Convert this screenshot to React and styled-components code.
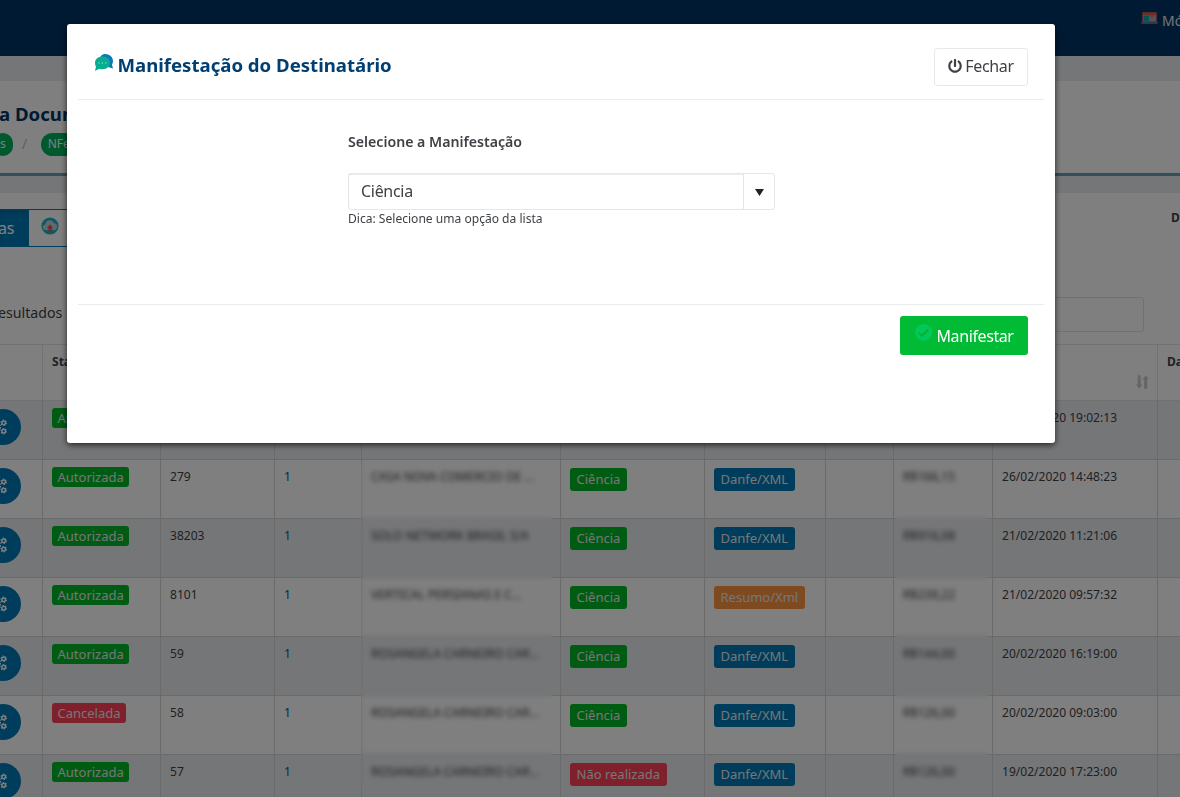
import React from "react";
import styled, { createGlobalStyle, css } from "styled-components";
import { FaPowerOff } from "react-icons/fa";

const Global = createGlobalStyle`
  *, *::before, *::after { box-sizing: border-box; }
  body { margin: 0; overflow: hidden; background: #ebedf1; color: #3e4246; font: 16px/1.5 "Noto Sans", "Open Sans", sans-serif; }
`;

const Page = styled.div`
  position: relative;
  width: 1180px;
  height: 797px;
  overflow: hidden;
  display: flex;
  flex-direction: column;
  background: #ebedf1;
`;
const TopBar = styled.header`
  height: 56px;
  flex: none;
  display: flex;
  justify-content: flex-end;
  background: #003468;
`;
const ModuleLink = styled.a`
  width: 39px;
  padding-top: 10px;
  display: flex;
  gap: 4px;
  color: #e8e8e8;
  font-size: 14px;
  line-height: 21px;
  white-space: nowrap;
  svg { flex: none; margin-top: 2px; }
`;
const Heading = styled.section`
  margin-top: 25px;
  height: 95px;
  flex: none;
  background: #fff;
  border-bottom: 3px solid #62a0b8;
  padding-top: 20px;
`;
const PageTitle = styled.h1`
  margin: 0 0 0 -1px;
  font-size: 18.6px;
  font-weight: 700;
  line-height: 26px;
  color: #003468;
`;
const Crumbs = styled.nav`
  margin-top: 6px;
  display: flex;
  align-items: center;
  height: 23px;
  font-size: 12px;
`;
const Crumb = styled.span`
  height: 23px;
  line-height: 21px;
  padding: 0 7px;
  border-radius: 12px;
  background: #00b05c;
  color: #fff;
  ${(p) => p.$cut && css`margin-left: -7px;`}
`;
const Slash = styled.span`
  width: 28px;
  padding-left: 9px;
  padding-bottom: 3px;
  color: #c0c4c8;
  font-size: 15px;
  line-height: 20px;
`;
const Panel = styled.section`
  margin-top: 17px;
  flex: 1;
  background: #fff;
  display: flex;
  flex-direction: column;
`;
const TabBar = styled.div`
  padding-top: 16px;
  display: flex;
  height: 54px;
  flex: none;
`;
const Tab = styled.button`
  height: 38px;
  border: 1px solid #007bb8;
  border-left: 0;
  border-radius: 0;
  padding: 0;
  text-indent: -2px;
  font: inherit;
  letter-spacing: -0.3px;
  color: ${(p) => (p.$active ? "#fff" : "#007bb8")};
  background: ${(p) => (p.$active ? "#007bb8" : "#fff")};
  box-shadow: ${(p) => (p.$active ? "inset 0 3px 5px rgba(0,0,0,.125)" : "none")};
  width: ${(p) => p.$w}px;
  display: flex;
  align-items: center;
  ${(p) => !p.$active && css`padding: 0 0 5px 12px; `}
`;
const Period = styled.span`
  margin-left: auto;
  width: 9px;
  font-size: 12px;
  font-weight: 700;
  line-height: 18px;
`;
const Filters = styled.div`
  height: 97px;
  flex: none;
  display: flex;
  justify-content: space-between;
  padding: 50px 36px 12px 0;
`;
const Results = styled.span`
  margin-left: -2px;
  font-size: 14.2px;
  line-height: 31px;
`;
const Search = styled.input`
  width: 200px;
  height: 35px;
  border: 1px solid #e2e2e2;
  border-radius: 3px;
  background: #fff;
`;
const Grid = styled.div`
  position: relative;
  display: flex;
  flex-direction: column;
  border-top: 1px solid #e2e2e2;
  font-size: 12.05px;
  line-height: 18px;
`;
const Row = styled.div`
  display: grid;
  grid-template-columns: 43px 118px 114px 87px 199px 144px 121px 68px 99px 165px 22px;
  height: ${(p) => (p.$head ? 56 : 59)}px;
  flex: none;
  font-weight: ${(p) => (p.$head ? 700 : 400)};
  background: ${(p) => (p.$odd ? "#ebedf1" : "#fff")};
`;
const Cell = styled.div`
  padding: 8px 9px;
  border-right: 1px solid ${(p) => (p.$head ? "#e2e2e2" : "#d6d7d9")};
  border-bottom: 1px solid ${(p) => (p.$head ? "#e2e2e2" : "#d6d7d9")};
  white-space: nowrap;
  overflow: hidden;
  display: flex;
  align-items: flex-start;
  ${(p) => p.$link && css`color: #005a92;`}
  &:last-child { border-right: 0; }
`;
const colors = { green: "#00b827", blue: "#007bb8", red: "#ff4058", orange: "#ff9440" };
const Tag = styled.span`
  background: ${(p) => colors[p.$tone]};
  color: #ececec;
  border-radius: 3px;
  font-size: 13px;
  padding: 0 5.500px;
  height: 20px;
  line-height: 20px;
  margin-top: -1px;
  ${(p) => p.$tall && css`height: 23px; line-height: 23px; margin-top: 0; padding: 0 6.5px;`}
`;
const GearButton = styled.button`
  width: 36px;
  height: 36px;
  flex: none;
  margin: 0 0 0 -24px;
  border: 0;
  border-radius: 50%;
  background: #007bb8;
  display: flex;
  align-items: center;
  justify-content: flex-end;
  padding: 0 14px 0 0;
`;
const SortMark = styled.span`
  margin: 22px -1px 0 auto;
  height: 14px;
  line-height: 0;
`;
const Privacy = styled.div`
  position: absolute;
  top: ${(p) => p.$y}px;
  left: ${(p) => p.$x}px;
  width: ${(p) => p.$w}px;
  height: 328px;
  backdrop-filter: blur(2.8px);
`;
const Backdrop = styled.div`
  position: absolute;
  inset: 0;
  padding: 24px 125px 0 67px;
  background: rgba(0, 0, 0, 0.5);
`;
const Dialog = styled.div`
  height: 419px;
  padding: 0 11px;
  background: #fff;
  border-radius: 3px;
  box-shadow: 0 2px 6px rgba(0, 0, 0, 0.7);
`;
const DialogHead = styled.div`
  height: 76px;
  padding: 24px 16px 0 17px;
  display: flex;
  justify-content: space-between;
  border-bottom: 1px solid #e9ebec;
`;
const DialogTitle = styled.h2`
  margin: 0;
  display: flex;
  gap: 4.500px;
  font-size: 18.6px;
  line-height: 34px;
  color: #003f72;
  svg { margin-top: 6px; }
`;
const CloseButton = styled.button`
  width: 94px;
  height: 38px;
  border: 1px solid #e6e9eb;
  border-radius: 3px;
  background: #fff;
  color: #3e4246;
  font: inherit;
  letter-spacing: -0.35px;
  padding: 0 0 2px;
  display: flex;
  align-items: center;
  justify-content: center;
  gap: 3px;
`;
const DialogBody = styled.div`
  height: 205px;
  border-bottom: 1px solid #e9ebec;
  padding: 31px 0 0 270px;
  display: flex;
  flex-direction: column;
`;
const Label = styled.label`
  font-size: 14.15px;
  font-weight: 600;
  line-height: 22px;
`;
const Combo = styled.div`
  margin-top: 20px;
  width: 427px;
  height: 37px;
  display: flex;
  border: 1px solid #e4e6e7;
  border-radius: 3px;
`;
const ComboValue = styled.span`
  flex: 1;
  padding-left: 12px;
  line-height: 34px;
  letter-spacing: -0.3px;
  border-right: 1px solid #e4e6e7;
  box-shadow: inset 0 1px 1px rgba(0, 0, 0, 0.075);
`;
const ComboArrow = styled.span`
  width: 30px;
  padding-top: 1px;
  display: flex;
  align-items: center;
  justify-content: center;
`;
const Hint = styled.small`
  font-size: 12.07px;
  line-height: 17px;
`;
const DialogFoot = styled.div`
  padding: 11px 16px 0;
  display: flex;
  justify-content: flex-end;
`;
const ConfirmButton = styled.button`
  width: 128px;
  height: 39px;
  border: 0;
  border-radius: 3px;
  background: #00bb33;
  color: #fff;
  font: inherit;
  letter-spacing: -0.4px;
  padding: 0 0 0 15px;
  display: flex;
  align-items: center;
  gap: 4.500px;
  svg { margin-top: -6px; }
`;

const ChatIcon = () => (
  <svg width="18" height="17" viewBox="0 0 17 17" preserveAspectRatio="none">
    <path d="M9.500 0C13.700 0 17 3 17 7c0 1.600-.5 2.800-1 3.600l1 4-4-1.300L5 3C6 1 7.500 0 9.500 0Z" fill="#0878b8" />
    <path d="M7 2.500c4.200 0 7.300 2.700 7.300 6.300S11.200 15.300 7 15.300c-1.200 0-2.100-.2-3-.6L0 17l.9-4.300C.3 11.600 0 10.400 0 8.900 0 5.200 3 2.500 7 2.500Z" fill="#08ad91" />
    <g fill="#7fe0cc"><circle cx="3.800" cy="9" r=".65" /><circle cx="7" cy="9" r=".65" /><circle cx="10.200" cy="9" r=".65" /></g>
  </svg>
);
const LaptopIcon = () => (
  <svg width="17" height="13" viewBox="0 0 17 13">
    <rect x="1" y="0" width="15" height="11" rx="1" fill="#a85560" />
    <rect x="2" y="1" width="13" height="2" fill="#e05a48" />
    <rect x="2" y="3" width="13" height="6.500" fill="#a9a5b4" />
    <rect x="2.500" y="3.500" width="5.500" height="5.500" fill="#08a9b8" />
    <path d="M9 3h5l-3 2.500z" fill="#e0685c" />
    <path d="M0 10h17v1l-1 1H1l-1-1z" fill="#6b727e" />
  </svg>
);
const CloudIcon = () => (
  <svg width="18" height="18" viewBox="0 0 18 18">
    <circle cx="9" cy="9" r="8.600" fill="#18b4cc" />
    <path d="M4.300 13C.8 12.800 1.200 7.800 4.300 7.500 4.800 2.200 11.600 1.900 12.900 6.200c4.300.1 4.100 6.500.5 6.800Z" fill="#c3d3da" />
    <path d="M9 7.500l3.300 3.700h-1.800v4H7.500v-4H5.700z" fill="#e84f4f" />
  </svg>
);
const CheckIcon = () => (
  <svg width="17" height="17" viewBox="0 0 17 17">
    <circle cx="8.500" cy="8.500" r="8.500" fill="#00c85a" />
    <path d="M3.700 8.600l3.100 3.100L13.300 5.500" fill="none" stroke="#00b030" strokeWidth="2" />
  </svg>
);
const GearsIcon = () => (
  <svg width="15" height="16" viewBox="0 0 15 16" fill="none" stroke="#fff">
    <circle cx="4" cy="8" r="3" strokeWidth="1.800" />
    <circle cx="4" cy="8" r="4.400" strokeWidth="1.200" strokeDasharray="1.730 1.730" />
    <circle cx="11.700" cy="3.800" r="1.800" strokeWidth="1.400" />
    <circle cx="11.700" cy="3.800" r="2.700" strokeWidth="1.200" strokeDasharray="1.410 1.410" />
    <circle cx="11.700" cy="12.200" r="1.800" strokeWidth="1.400" />
    <circle cx="11.700" cy="12.200" r="2.700" strokeWidth="1.200" strokeDasharray="1.410 1.410" />
  </svg>
);
const SortIcon = () => (
  <svg width="13" height="14" viewBox="0 0 13 14" fill="#cacbcc">
    <path d="M1.700 .3h3v9.200H6.400L3.200 13.700 0 9.500h1.700zM8.200 13.700h3V4.500h1.700L9.700.3 6.500 4.500h1.700z" />
  </svg>
);

const rows = [
  ["Autorizada", "280", "1", "", "Ciência", "Danfe/XML", "", "27/02/2020 19:02:13"],
  ["Autorizada", "279", "1", "CASA NOVA COMERCIO DE ...", "Ciência", "Danfe/XML", "R$166,15", "26/02/2020 14:48:23"],
  ["Autorizada", "38203", "1", "SOLO NETWORK BRASIL S/A", "Ciência", "Danfe/XML", "R$916,08", "21/02/2020 11:21:06"],
  ["Autorizada", "8101", "1", "VERTICAL PERSIANAS E C...", "Ciência", "Resumo/Xml", "R$239,22", "21/02/2020 09:57:32"],
  ["Autorizada", "59", "1", "ROSANGELA CARNEIRO CAR...", "Ciência", "Danfe/XML", "R$144,00", "20/02/2020 16:19:00"],
  ["Cancelada", "58", "1", "ROSANGELA CARNEIRO CAR...", "Ciência", "Danfe/XML", "R$126,00", "20/02/2020 09:03:00"],
  ["Autorizada", "57", "1", "ROSANGELA CARNEIRO CAR...", "Não realizada", "Danfe/XML", "R$126,00", "19/02/2020 17:23:00"],
];

const HeadRow = () => (
  <Row $head>
    <Cell $head />
    <Cell $head>Status</Cell>
    {Array.from({ length: 7 }, (_, i) => <Cell $head key={i} />)}
    <Cell $head><SortMark><SortIcon /></SortMark></Cell>
    <Cell $head>Data</Cell>
  </Row>
);

const InvoiceRow = ({ data, odd }) => {
  const [status, number, serie, name, event, file, value, date] = data;
  return (
    <Row $odd={odd}>
      <Cell><GearButton><GearsIcon /></GearButton></Cell>
      <Cell><Tag $tone={status === "Cancelada" ? "red" : "green"}>{status}</Tag></Cell>
      <Cell>{number}</Cell>
      <Cell $link>{serie}</Cell>
      <Cell>{name}</Cell>
      <Cell><Tag $tall $tone={event === "Ciência" ? "green" : "red"}>{event}</Tag></Cell>
      <Cell><Tag $tall $tone={file === "Resumo/Xml" ? "orange" : "blue"}>{file}</Tag></Cell>
      <Cell />
      <Cell>{value}</Cell>
      <Cell>{date}</Cell>
      <Cell />
    </Row>
  );
};

export default function App() {
  return (
    <Page>
      <Global />
      <TopBar><ModuleLink><LaptopIcon />Módulos</ModuleLink></TopBar>
      <Heading>
        <PageTitle>a Documentos</PageTitle>
        <Crumbs><Crumb $cut>s</Crumb><Slash>/</Slash><Crumb>NFe</Crumb></Crumbs>
      </Heading>
      <Panel>
        <TabBar>
          <Tab $active $w={29}>as</Tab>
          <Tab $w={140}><CloudIcon /></Tab>
          <Period>De</Period>
        </TabBar>
        <Filters><Results>esultados</Results><Search /></Filters>
        <Grid>
          <HeadRow />
          {rows.map((r, i) => <InvoiceRow key={i} data={r} odd={i % 2 === 0} />)}
          <Privacy $x={361} $y={117} $w={191} />
          <Privacy $x={896} $y={117} $w={92} />
        </Grid>
      </Panel>
      <Backdrop>
        <Dialog role="dialog">
          <DialogHead>
            <DialogTitle><ChatIcon />Manifestação do Destinatário</DialogTitle>
            <CloseButton><FaPowerOff size={14} />Fechar</CloseButton>
          </DialogHead>
          <DialogBody>
            <Label>Selecione a Manifestação</Label>
            <Combo>
              <ComboValue>Ciência</ComboValue>
              <ComboArrow><svg width="9" height="7"><path d="M0 0h9L4.500 7z" fill="#222" /></svg></ComboArrow>
            </Combo>
            <Hint>Dica: Selecione uma opção da lista</Hint>
          </DialogBody>
          <DialogFoot><ConfirmButton><CheckIcon />Manifestar</ConfirmButton></DialogFoot>
        </Dialog>
      </Backdrop>
    </Page>
  );
}
